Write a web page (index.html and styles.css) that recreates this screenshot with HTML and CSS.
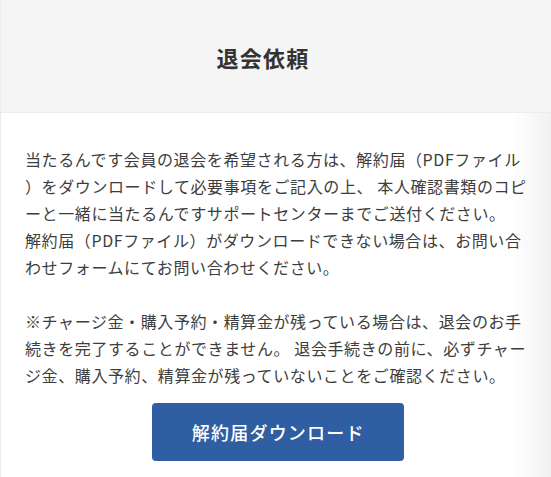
FILE: index.html
```html
<!DOCTYPE html>
<html lang="ja">
<head>
<meta charset="utf-8">
<title>退会依頼</title>
<link rel="stylesheet" href="styles.css">
</head>
<body>
<div class="page">
  <header class="page-header">
    <h1 class="page-title">退会依頼</h1>
  </header>
  <main class="content">
    <p class="text">当たるんです会員の退会を希望される方は、解約届（PDFファイル）をダウンロードして必要事項をご記入の上、 本人確認書類のコピーと一緒に当たるんですサポートセンターまでご送付ください。<br>解約届（PDFファイル）がダウンロードできない場合は、お問い合わせフォームにてお問い合わせください。</p>
    <p class="text">※チャージ金・購入予約・精算金が残っている場合は、退会のお手続きを完了することができません。 退会手続きの前に、必ずチャージ金、購入予約、精算金が残っていないことをご確認ください。</p>
    <div class="actions">
      <a class="btn" href="#">解約届ダウンロード</a>
    </div>
  </main>
</div>
</body>
</html>
```

FILE: styles.css
```css
html, body {
  margin: 0;
  padding: 0;
  background: #ffffff;
}
body {
  font-family: "Noto Sans CJK JP", "Noto Sans", sans-serif;
  color: #3a3a3a;
}
.page {
  min-height: 477px;
  border-left: 1px solid #ececec;
  background: linear-gradient(to right, #ffffff 0, #ffffff 93%, #f1f1f1 100%);
}
.page-header {
  height: 112px;
  background: #f5f5f5;
  border-bottom: 1px solid #ededed;
  display: flex;
  align-items: center;
  justify-content: center;
  padding-right: 26px;
}
.page-title {
  margin: 0;
  font-size: 22px;
  font-weight: 700;
  letter-spacing: 1.2px;
  color: #333333;
  padding-top: 1px;
}
.content {
  padding: 33px 23.5px 0 24px;
}
.text {
  margin: 0 0 27px 0;
  font-size: 16px;
  line-height: 27px;
  letter-spacing: 0.6px;
  color: #3d3d3d;
  line-break: anywhere;
}
.text:last-of-type {
  margin-bottom: 13px;
}
.actions {
  display: flex;
  justify-content: center;
  padding-left: 4px;
}
.btn {
  display: flex;
  align-items: center;
  justify-content: center;
  width: 252px;
  height: 58px;
  margin-top: 1px;
  background: #2f5ea3;
  border-radius: 4px;
  color: #ffffff;
  text-decoration: none;
  font-size: 18px;
  font-weight: 500;
  letter-spacing: 1.2px;
}
```
